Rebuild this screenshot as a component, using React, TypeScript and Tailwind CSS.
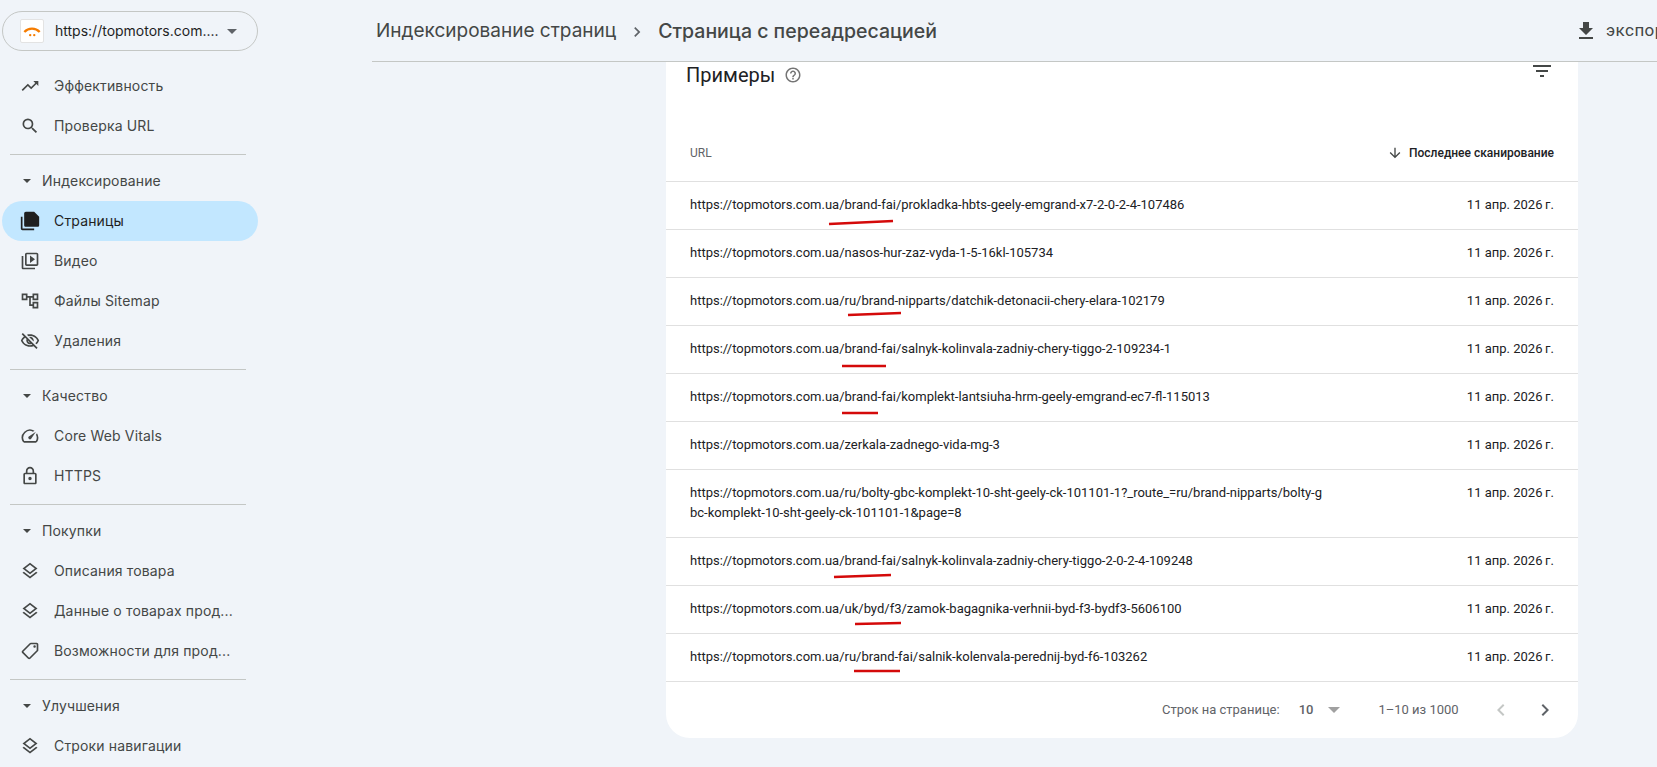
import type { ReactNode } from "react";

const icons: Record<string, ReactNode> = {
  trend: <path d="M16 6l2.29 2.29-4.88 4.88-4-4L2 16.59 3.41 18l6-6 4 4 6.3-6.29L22 12V6z" />,
  search: <path d="M15.5 14h-.79l-.28-.27A6.47 6.47 0 0 0 16 9.5 6.5 6.5 0 1 0 9.5 16c1.61 0 3.09-.59 4.23-1.57l.27.28v.79l5 4.99L20.49 19l-4.99-5zm-6 0C7.01 14 5 11.99 5 9.5S7.01 5 9.5 5 14 7.01 14 9.5 11.99 14 9.5 14z" />,
  pages: <path d="M3 7H1v14c0 1.1.9 2 2 2h14v-2H3V7zm14-6H7c-1.1 0-2 .9-2 2v14c0 1.1.9 2 2 2h14c1.1 0 2-.9 2-2V7l-6-6z" />,
  video: <path d="M4 6H2v14c0 1.1.9 2 2 2h14v-2H4V6zm16-4H8c-1.1 0-2 .9-2 2v12c0 1.1.9 2 2 2h12c1.1 0 2-.9 2-2V4c0-1.1-.9-2-2-2zm0 14H8V4h12v12zM12 5.5v9l6-4.5z" />,
  sitemap: <path d="M22 11V3h-7v3H9V3H2v8h7V8h2v10h4v3h7v-8h-7v3h-2V8h2v3h7zM7 9H4V5h3v4zm10 6h3v4h-3v-4zm0-10h3v4h-3V5z" />,
  eyeOff: <path d="M12 6a9.77 9.77 0 0 1 8.82 5.5 9.65 9.65 0 0 1-2.41 3.12l1.41 1.41A11.8 11.8 0 0 0 23 11.5C21.27 7.11 17 4 12 4c-1.27 0-2.49.2-3.64.57l1.65 1.65C10.66 6.09 11.32 6 12 6zm-1.07 1.14L13 9.21c.57.25 1.03.71 1.28 1.28l2.07 2.07c.08-.34.14-.7.14-1.07C16.5 9.01 14.48 7 12 7c-.37 0-.72.05-1.07.14zM2.01 3.87l2.68 2.68A11.74 11.74 0 0 0 1 11.5C2.73 15.89 7 19 12 19c1.52 0 2.98-.29 4.32-.82l3.42 3.42 1.41-1.41L3.42 2.45 2.01 3.87zm7.5 7.5 2.61 2.61c-.04.01-.08.02-.12.02a2.5 2.5 0 0 1-2.5-2.5c0-.05.01-.08.01-.13zm-3.4-3.4 1.75 1.75a4.6 4.6 0 0 0-.36 1.78 4.5 4.5 0 0 0 6.27 4.14l.98.98c-.88.24-1.8.38-2.75.38a9.77 9.77 0 0 1-8.82-5.5c.7-1.43 1.72-2.61 2.93-3.53z" />,
  gauge: <path d="M20.38 8.57l-1.23 1.85a8 8 0 0 1-.22 7.58H5.07A8 8 0 0 1 15.58 6.85l1.85-1.23A10 10 0 0 0 3.35 19a2 2 0 0 0 1.72 1h13.85a2 2 0 0 0 1.74-1 10 10 0 0 0-.27-10.44zm-9.79 6.84a2 2 0 0 0 2.83 0l5.66-8.49-8.49 5.66a2 2 0 0 0 0 2.83z" />,
  lock: <path d="M18 8h-1V6c0-2.76-2.24-5-5-5S7 3.24 7 6v2H6c-1.1 0-2 .9-2 2v10c0 1.1.9 2 2 2h12c1.1 0 2-.9 2-2V10c0-1.1-.9-2-2-2zM9 6c0-1.66 1.34-3 3-3s3 1.34 3 3v2H9V6zm9 14H6V10h12v10zm-6-3c1.1 0 2-.9 2-2s-.9-2-2-2-2 .9-2 2 .9 2 2 2z" />,
  layers: <path d="M11.99 18.54l-7.37-5.73L3 14.07l9 7 9-7-1.63-1.27-7.38 5.74zM12 16l7.36-5.73L21 9l-9-7-9 7 1.63 1.27L12 16zm0-11.47L17.74 9 12 13.47 6.26 9 12 4.53z" />,
  label: (
    <g transform="translate(24 0) scale(-1 1)">
      <path d="M21.41 11.58l-9-9C12.05 2.22 11.55 2 11 2H4c-1.1 0-2 .9-2 2v7c0 .55.22 1.05.59 1.42l9 9c.36.36.86.58 1.41.58s1.05-.22 1.41-.59l7-7c.37-.36.59-.86.59-1.41s-.23-1.06-.59-1.42zM13 20.01L4 11V4h7v-.01l9 9-7 7.02zM6.5 5A1.5 1.5 0 1 1 6.5 8a1.5 1.5 0 0 1 0-3z" />
    </g>
  ),
};

function Icon({ name, className = "" }: { name: string; className?: string }) {
  return (
    <svg viewBox="0 0 24 24" fill="currentColor" className={`w-5 h-5 ${className}`}>
      {icons[name]}
    </svg>
  );
}

function NavItem({ icon, label, active }: { icon: string; label: string; active?: boolean }) {
  return (
    <div
      className={`flex items-center h-10 ml-[2px] pl-[18px] w-[256px] rounded-full text-sm tracking-[0.15px] ${
        active ? "bg-[#c2e7ff] text-[#1f1f1f]" : "text-[#444746]"
      }`}
    >
      <Icon name={icon} className="shrink-0" />
      <span className="ml-[14px] whitespace-nowrap">{label}</span>
    </div>
  );
}

function Section({ label }: { label: string }) {
  return (
    <div className="flex items-center h-10 pl-[23px] text-sm tracking-[0.15px] text-[#444746]">
      <span className="w-0 h-0 border-x-[4px] border-x-transparent border-t-[4px] border-t-[#444746]" />
      <span className="ml-[11px]">{label}</span>
    </div>
  );
}

function Divider() {
  return <div className="h-px bg-[#c4c7c5] ml-[10px] w-[236px] mt-2 mb-[6px]" />;
}

function Sidebar() {
  return (
    <aside className="w-[372px] shrink-0 h-[767px] overflow-hidden font-['Inter',sans-serif]">
      <div className="ml-[2px] mt-[11px] w-[256px] h-10 rounded-full border border-[#c4c7c5] flex items-center pl-[17px]">
        <span className="w-6 h-6 bg-white border border-[#e3e3e3] rounded-[2px] flex items-center justify-center">
          <svg viewBox="0 0 20 12" className="w-[18px] h-[11px]">
            <path d="M1.5 6.5C6 1.5 14 1.5 18.5 6.5" fill="none" stroke="#f57c00" strokeWidth="2.5" />
            <circle cx="8" cy="10" r="1.3" fill="#f57c00" />
            <circle cx="12.5" cy="10" r="1.3" fill="#f57c00" />
          </svg>
        </span>
        <span className="ml-[11px] text-sm text-[#1f1f1f] whitespace-nowrap">https://topmotors.com....</span>
        <span className="ml-2 w-0 h-0 border-x-[5px] border-x-transparent border-t-[5px] border-t-[#5f6368]" />
      </div>
      <div className="mt-[15px]">
        <NavItem icon="trend" label="Эффективность" />
        <NavItem icon="search" label="Проверка URL" />
      </div>
      <Divider />
      <Section label="Индексирование" />
      <NavItem icon="pages" label="Страницы" active />
      <NavItem icon="video" label="Видео" />
      <NavItem icon="sitemap" label="Файлы Sitemap" />
      <NavItem icon="eyeOff" label="Удаления" />
      <Divider />
      <Section label="Качество" />
      <NavItem icon="gauge" label="Core Web Vitals" />
      <NavItem icon="lock" label="HTTPS" />
      <Divider />
      <Section label="Покупки" />
      <NavItem icon="layers" label="Описания товара" />
      <NavItem icon="layers" label="Данные о товарах прод..." />
      <NavItem icon="label" label="Возможности для прод..." />
      <Divider />
      <Section label="Улучшения" />
      <NavItem icon="layers" label="Строки навигации" />
    </aside>
  );
}

// mark: hand-drawn red underline, x1 x2 y1 y2 from the row's top-left corner
const rows = [
  { url: "https://topmotors.com.ua/brand-fai/prokladka-hbts-geely-emgrand-x7-2-0-2-4-107486", mark: [163, 227, 42, 39] },
  { url: "https://topmotors.com.ua/nasos-hur-zaz-vyda-1-5-16kl-105734" },
  { url: "https://topmotors.com.ua/ru/brand-nipparts/datchik-detonacii-chery-elara-102179", mark: [182, 235, 37, 35] },
  { url: "https://topmotors.com.ua/brand-fai/salnyk-kolinvala-zadniy-chery-tiggo-2-109234-1", mark: [176, 220, 40, 40] },
  { url: "https://topmotors.com.ua/brand-fai/komplekt-lantsiuha-hrm-geely-emgrand-ec7-fl-115013", mark: [176, 212, 39, 39] },
  { url: "https://topmotors.com.ua/zerkala-zadnego-vida-mg-3" },
  {
    url: "https://topmotors.com.ua/ru/bolty-gbc-komplekt-10-sht-geely-ck-101101-1?_route_=ru/brand-nipparts/bolty-g",
    url2: "bc-komplekt-10-sht-geely-ck-101101-1&page=8",
  },
  { url: "https://topmotors.com.ua/brand-fai/salnyk-kolinvala-zadniy-chery-tiggo-2-0-2-4-109248", mark: [168, 225, 39, 37] },
  { url: "https://topmotors.com.ua/uk/byd/f3/zamok-bagagnika-verhnii-byd-f3-bydf3-5606100", mark: [189, 235, 38, 37] },
  { url: "https://topmotors.com.ua/ru/brand-fai/salnik-kolenvala-perednij-byd-f6-103262", mark: [188, 234, 37, 37] },
];

function Row({ url, url2, mark }: { url: string; url2?: string; mark?: number[] }) {
  return (
    <div className={`relative flex justify-between px-6 pt-[13px] border-b border-[#e0e0e0] text-[13px] leading-5 text-[#202124] ${url2 ? "h-[68px]" : "h-12"}`}>
      <div>
        <div className="whitespace-nowrap">{url}</div>
        {url2 && <div className="whitespace-nowrap">{url2}</div>}
      </div>
      <div className="whitespace-nowrap">11 апр. 2026{"\u2009"}г.</div>
      {mark && (
        <svg className="absolute left-0 top-0 w-[500px] h-[48px] pointer-events-none">
          <line x1={mark[0]} y1={mark[2]} x2={mark[1]} y2={mark[3]} stroke="#d40a0a" strokeWidth="2.5" />
        </svg>
      )}
    </div>
  );
}

function Main() {
  return (
    <main className="flex-1 min-w-0 h-[767px] overflow-hidden font-['Roboto',sans-serif]">
      <header className="h-[62px] border-b border-[#c4c7c5] flex items-center pl-[4px]">
        <span className="pt-[2px] text-[19px] text-[#444746] font-['Inter',sans-serif] whitespace-nowrap">Индексирование страниц</span>
        <svg viewBox="0 0 24 24" fill="#5f6368" className="w-5 h-5 mx-[11px] mt-[2px] shrink-0">
          <path d="M8.59 16.59 13.17 12 8.59 7.41 10 6l6 6-6 6z" />
        </svg>
        <span className="pt-[2px] text-[19.5px] text-[#444746] font-medium font-['Inter',sans-serif] whitespace-nowrap">Страница с переадресацией</span>
        <div className="ml-auto flex items-center text-[17px] text-[#444746] whitespace-nowrap w-[83px] overflow-hidden shrink-0">
          <svg viewBox="0 0 24 24" fill="#444746" className="w-6 h-6 shrink-0">
            <path d="M19 9h-4V3H9v6H5l7 7 7-7zM5 18v2h14v-2H5z" />
          </svg>
          <span className="ml-2 tracking-wide">экспортировать</span>
        </div>
      </header>
      <section className="ml-[294px] w-[912px] h-[676px] bg-white rounded-b-[24px]">
        <div className="h-[72px] flex justify-between px-5">
          <div className="flex items-start -mt-px">
            <span className="text-xl text-[#202124] leading-7">Примеры</span>
            <svg viewBox="0 0 24 24" fill="#757575" className="w-[18px] h-[18px] ml-[9px] mt-[5px]">
              <path d="M11 18h2v-2h-2v2zm1-16C6.48 2 2 6.48 2 12s4.48 10 10 10 10-4.48 10-10S17.52 2 12 2zm0 18c-4.41 0-8-3.59-8-8s3.59-8 8-8 8 3.59 8 8-3.59 8-8 8zm0-14c-2.21 0-4 1.79-4 4h2c0-1.1.9-2 2-2s2 .9 2 2c0 2-3 1.75-3 5h2c0-2.25 3-2.5 3-5 0-2.21-1.79-4-4-4z" />
            </svg>
          </div>
          <svg viewBox="0 0 24 24" fill="#444746" className="w-6 h-6 mr-1 -mt-[3px]">
            <path d="M10 18h4v-2h-4v2zM3 6v2h18V6H3zm3 7h12v-2H6v2z" />
          </svg>
        </div>
        <div className="flex justify-between items-center h-12 px-6 pb-[10px] border-b border-[#e0e0e0] text-xs">
          <span className="text-[#5f6368]">URL</span>
          <span className="flex items-center font-medium text-[#202124]">
            <svg viewBox="0 0 24 24" fill="#444746" className="w-4 h-4 mr-[6px]">
              <path d="M20 12l-1.41-1.41L13 16.17V4h-2v12.17l-5.58-5.59L4 12l8 8 8-8z" />
            </svg>
            Последнее сканирование
          </span>
        </div>
        {rows.map((r) => (
          <Row key={r.url} {...r} />
        ))}
        <div className="flex items-center h-14 text-[13px] text-[#5f6368]">
          <span className="ml-[496px]">Строк на странице:</span>
          <span className="ml-[19px] font-medium">10</span>
          <span className="ml-[15px] w-0 h-0 border-x-[6px] border-x-transparent border-t-[6px] border-t-[#a0a0a0]" />
          <span className="ml-[38px]">1–10 из 1000</span>
          <svg viewBox="0 0 24 24" fill="#c4c7c5" className="w-6 h-6 ml-[30px]">
            <path d="M15.41 16.59 10.83 12l4.58-4.59L14 6l-6 6 6 6z" />
          </svg>
          <svg viewBox="0 0 24 24" fill="#5f6368" className="w-6 h-6 ml-[20px]">
            <path d="M8.59 16.59 13.17 12 8.59 7.41 10 6l6 6-6 6z" />
          </svg>
        </div>
      </section>
    </main>
  );
}

export default function App() {
  return (
    <div className="flex w-[1657px] h-[767px] overflow-hidden bg-[#f0f4f9]">
      <Sidebar />
      <Main />
    </div>
  );
}
